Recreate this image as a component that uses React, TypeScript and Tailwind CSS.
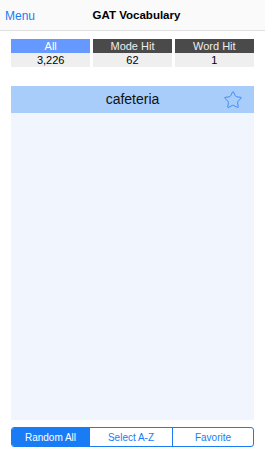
import { Star } from 'lucide-react';

const stats = [
  { label: 'All', value: '3,226', active: true },
  { label: 'Mode Hit', value: '62', active: false },
  { label: 'Word Hit', value: '1', active: false },
];

const tabs = ['Random All', 'Select A-Z', 'Favorite'];

export default function App() {
  return (
    <div className="flex h-[471px] w-[265px] flex-col bg-white font-['Helvetica','Liberation_Sans',sans-serif]">
      <header className="flex h-[31px] shrink-0 items-center border-b border-[#e0e0e0] bg-[#fafafa] px-[5px] pt-[2px]">
        <span className="w-[40px] text-[12px] text-[#1a7cf5]">Menu</span>
        <h1 className="flex-1 pr-[32px] text-center text-[11.5px] font-bold text-black">GAT Vocabulary</h1>
      </header>

      <div className="mt-[8px] flex gap-[2.5px] px-[11px]">
        {stats.map((s) => (
          <div key={s.label} className="flex flex-1 flex-col">
            <div
              className={
                s.active
                  ? 'flex h-[14px] items-center justify-center bg-[#6699ff] text-[11px] text-white'
                  : 'flex h-[14px] items-center justify-center bg-[#4a4a4a] text-[11px] text-[#eeeeee]'
              }
            >
              {s.label}
            </div>
            <div className="flex h-[14px] items-center justify-center bg-[#efefef] text-[11px] text-black">
              {s.value}
            </div>
          </div>
        ))}
      </div>

      <div className="mx-[11px] mt-[19px] flex h-[27px] items-center bg-[#a9cdfb] px-[11px]">
        <span className="flex-1 pl-[20px] text-center text-[14px] text-[#111]">cafeteria</span>
        <Star className="h-[20px] w-[20px] text-[#3d8df5]" strokeWidth={1.2} />
      </div>
      <div className="mx-[11px] h-[307px] bg-[#f1f6fe]" />

      <div className="mx-[11px] mt-[7px] flex h-[20px] overflow-hidden rounded-[3px] border border-[#1a7cf5] text-[10px]">
        {tabs.map((t, i) => (
          <div
            key={t}
            className={
              i === 0
                ? 'flex w-[77px] items-center justify-center bg-[#1a7cf5] text-white'
                : i === 1
                  ? 'flex w-[83px] items-center justify-center border-l border-[#1a7cf5] text-[#1a7cf5]'
                  : 'flex flex-1 items-center justify-center border-l border-[#1a7cf5] text-[#1a7cf5]'
            }
          >
            {t}
          </div>
        ))}
      </div>
    </div>
  );
}
